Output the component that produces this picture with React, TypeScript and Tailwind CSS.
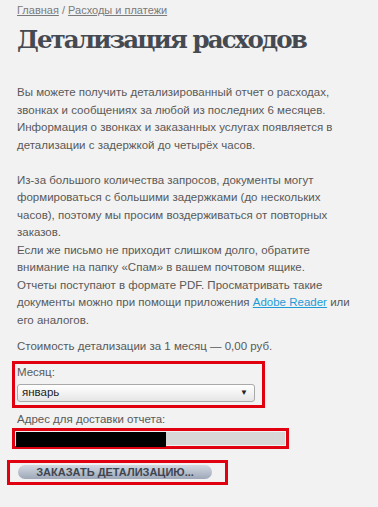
import React from "react";

const BODY = "font-['Liberation_Sans',Arial,sans-serif]";

export default function App() {
  return (
    <div className={`min-h-screen w-full bg-[#f2f2f2] ${BODY} text-[#595959]`}>
      <div className="pl-[17px] pr-[20px] pt-[3px] pb-[20px]">
        {/* Breadcrumb */}
        <nav className="text-[11px] leading-[14px] text-[#7a7a7a]">
          <a className="underline">Главная</a>
          <span> / </span>
          <a className="underline">Расходы и платежи</a>
        </nav>

        {/* Title */}
        <h1 className="mt-[8px] font-['DejaVu_Serif',serif] font-bold text-[24.5px] leading-[30px] tracking-[-1.9px] text-[#454a52]">
          Детализация расходов
        </h1>

        {/* Info text */}
        <div className="mt-[29px] text-[11.5px] leading-[17.5px]">
          <p>
            Вы можете получить детализированный отчет о расходах, звонках и
            сообщениях за любой из последних 6 месяцев. Информация о звонках и
            заказанных услугах появляется в детализации с задержкой до четырёх
            часов.
            <br />
            <br />
            Из-за большого количества запросов, документы могут формироваться с
            большими задержками (до нескольких часов), поэтому мы просим
            воздерживаться от повторных заказов.
            <br />
            Если же письмо не приходит слишком долго, обратите внимание на папку
            «Спам» в вашем почтовом ящике.
            <br />
            Отчеты поступают в формате PDF. Просматривать такие документы можно
            при помощи приложения <a className="text-[#1e9bd7] underline">Adobe Reader</a>{" "}
            или его аналогов.
          </p>
          <p className="mt-[9px]">Стоимость детализации за 1 месяц — 0,00 руб.</p>
        </div>

        {/* Month select */}
        <div className="mt-[5px] -ml-[5px] w-[253px] border-[3px] border-[#e0000f] pl-[2px] pr-[7px] pb-[3px]">
          <div className="text-[11.5px] leading-[17px]">Месяц:</div>
          <div className="mt-[3px] flex h-[18px] items-center justify-between rounded-[3px] border border-[#a9a9a9] bg-gradient-to-b from-[#ffffff] to-[#e6e6e6] pl-[4px] pr-[6px] text-[11.5px] text-[#222]">
            <span>январь</span>
            <span className="text-[8px] leading-none">▼</span>
          </div>
        </div>

        {/* Address */}
        <div className="mt-[3px] text-[11.5px] leading-[17px]">Адрес для доставки отчета:</div>
        <div className="-ml-[5px] w-[277px] border-[3px] border-[#e0000f] p-[1px]">
          <div className="flex h-[13px] bg-[#d7d7d7]">
            <div className="h-[15px] w-[150px] bg-black" />
          </div>
        </div>

        {/* Submit */}
        <div className="mt-[11px] -ml-[10px] flex h-[25px] w-[221px] items-center border-[3px] border-[#e0000f] pl-[8px]">
          <button className="flex h-[14px] w-[194px] items-center justify-center rounded-full bg-gradient-to-b from-[#d3d9e2] to-[#9ea8b8] text-[11px] font-bold uppercase leading-none text-[#3e4550]">
            Заказать детализацию...
          </button>
        </div>
      </div>
    </div>
  );
}
